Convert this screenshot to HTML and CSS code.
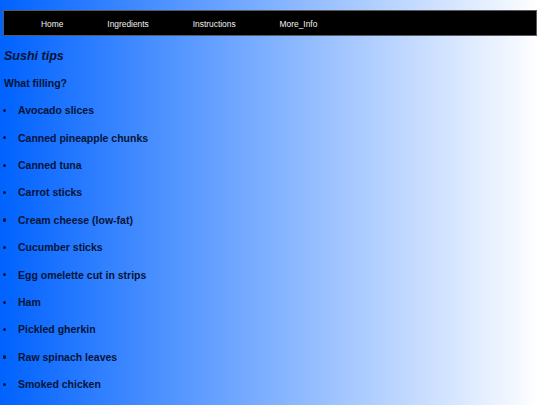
FILE: index.html
```html
<!DOCTYPE html>
<html>
<head>
<meta charset="utf-8">
<title>Sushi tips</title>
<link rel="stylesheet" href="styles.css">
</head>
<body>
<nav class="topnav">
  <a class="navlink" href="#">Home</a>
  <a class="navlink" href="#">Ingredients</a>
  <a class="navlink" href="#">Instructions</a>
  <a class="navlink" href="#">More_Info</a>
</nav>
<h1 class="title">Sushi tips</h1>
<h2 class="subtitle">What filling?</h2>
<ul class="fillings">
  <li class="filling">Avocado slices</li>
  <li class="filling">Canned pineapple chunks</li>
  <li class="filling">Canned tuna</li>
  <li class="filling">Carrot sticks</li>
  <li class="filling">Cream cheese (low-fat)</li>
  <li class="filling">Cucumber sticks</li>
  <li class="filling">Egg omelette cut in strips</li>
  <li class="filling">Ham</li>
  <li class="filling">Pickled gherkin</li>
  <li class="filling">Raw spinach leaves</li>
  <li class="filling">Smoked chicken</li>
</ul>
</body>
</html>
```
FILE: styles.css
```css
html {
  background: linear-gradient(to right, #0062ff 0%, #ffffff 100%);
  min-height: 100%;
}
body {
  margin: 0;
  padding: 10px 3px 0;
  font-family: "Liberation Sans", Arial, sans-serif;
  color: #061436;
}
.topnav {
  display: flex;
  align-items: center;
  gap: 44px;
  height: 23px;
  padding: 1px 0 0 37px;
  background: #000;
  border: 1px solid #5a5a5a;
}
.navlink {
  color: #f0f0f0;
  text-decoration: none;
  font-size: 8.4px;
}
.title {
  margin: 6.5px 0 0 1px;
  font-size: 12.5px;
  font-style: italic;
  font-weight: bold;
  line-height: 27.4px;
}
.subtitle {
  margin: 0 0 0 1px;
  font-size: 10.5px;
  font-weight: bold;
  line-height: 27.2px;
}
.fillings {
  margin: 0;
  padding: 0;
  list-style: none;
}
.filling {
  display: flex;
  align-items: baseline;
  font-size: 10.5px;
  font-weight: bold;
  line-height: 27.4px;
}
.filling::before {
  content: "";
  flex: none;
  width: 3.2px;
  height: 3.2px;
  margin: 0 11.8px 0 0;
  border-radius: 50%;
  background: #061436;
  align-self: center;
  position: relative;
  top: -0.4px;
}
```
